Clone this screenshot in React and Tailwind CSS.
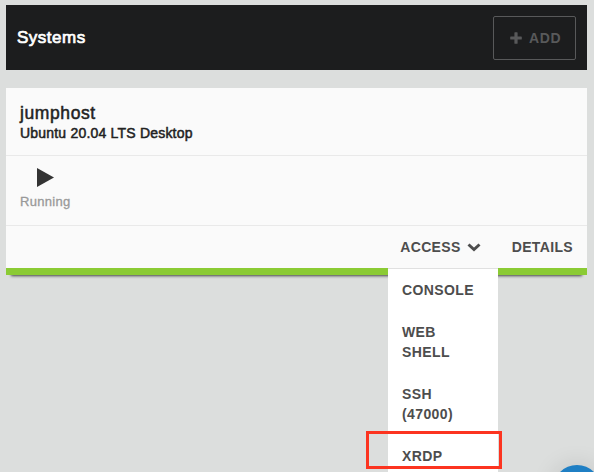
function Header() {
  return (
    <header className="flex h-[65px] items-center justify-between bg-[#1c1d1e] pl-[11px] pr-[11px]">
      <h1 className="pt-px text-[17px] leading-5 tracking-[0.5px] text-white [-webkit-text-stroke:0.7px_#fff]">Systems</h1>
      <button className="flex h-11 w-[83px] items-center rounded-[2px] border border-[#58595a] pl-4 text-[#58595a]">
        <svg className="mr-[7px] h-[12px] w-[12px]" viewBox="0 0 12 12" fill="currentColor">
          <path d="M5 .2h2q.6 0 .6.6v3.600h3.600q.6 0 .6.6v2q0 .6-.6.6H7.600v3.600q0 .6-.6.6H5q-.6 0-.6-.6V7.600H.8Q.2 7.600.2 7V5q0-.6.6-.6h3.600V.8Q4.400.2 5 .2z" />
        </svg>
        <span className="pt-0.5 text-[14px] font-bold tracking-[0.6px]">ADD</span>
      </button>
    </header>
  );
}

const items = ["CONSOLE", "WEB SHELL", "SSH (47000)", "XRDP"];

function AccessMenu() {
  return (
    <div className="absolute left-[382px] top-[180px] w-[109.5px] border-t border-[#e0e0e0] bg-white pt-[11px]">
      {items.map((item) => (
        <div
          key={item}
          className="mb-[22px] w-[90px] pl-[14px] text-[14px] font-bold leading-5 tracking-[0.4px] text-[#4d4d4d]"
        >
          {item}
        </div>
      ))}
    </div>
  );
}

function SystemCard() {
  return (
    <section className="relative mt-[18px] h-[187px] bg-[#fafafa]">
      <div className="absolute inset-x-[5px] bottom-0 h-1 shadow-[0_1px_3px_rgba(0,0,0,0.7)]" />
      <div className="h-[68px] border-b border-[#e9e9e9] pl-[14px] pt-[14px] text-[#222]">
        <h2 className="text-[17.5px] leading-[23px] tracking-[0.6px] [-webkit-text-stroke:0.5px_#222]">jumphost</h2>
        <p className="text-[14px] leading-[17px] tracking-[0.2px] [-webkit-text-stroke:0.5px_#222]">Ubuntu 20.04 LTS Desktop</p>
      </div>
      <div className="h-[70px] border-b border-[#e9e9e9] pl-[14px] pt-3">
        <svg className="ml-[17px] h-[19px] w-[17px]" viewBox="0 0 17 19">
          <path d="M0 0 17 9.500 0 19z" fill="#333" />
        </svg>
        <p className="mt-[6px] text-[13px] leading-[18px] tracking-[0.3px] text-[#999] [-webkit-text-stroke:0.3px_#999]">Running</p>
      </div>
      <div className="flex h-[42px] items-center justify-end pr-[14px] text-[14px] font-bold tracking-[0.35px] text-[#4d4d4d]">
        <span>ACCESS</span>
        <svg className="ml-[6px] mr-[31px] mt-[1px] h-[9px] w-[14px]" viewBox="0 0 14 9" fill="none">
          <path d="m1.500 1.500 5.500 5 5.500-5" stroke="currentColor" strokeWidth="3" />
        </svg>
        <span>DETAILS</span>
      </div>
      <div className="relative h-[7px] bg-[#8bcb34]" />
      <AccessMenu />
    </section>
  );
}

export default function App() {
  return (
    <main className="relative h-[472px] w-[594px] overflow-hidden bg-[#dcdedd] pl-[6px] pr-[7px] pt-[5px] font-['Liberation_Sans',Arial,sans-serif]">
      <Header />
      <SystemCard />
      <div className="absolute left-[366px] top-[431px] h-[38px] w-[136px] border-[3px] border-[#fc3420]" />
      <div className="absolute left-[553px] top-[465px] h-12 w-12 rounded-full bg-[#1f7fc4] shadow-[0_0_24px_rgba(0,0,0,0.12)]" />
    </main>
  );
}
